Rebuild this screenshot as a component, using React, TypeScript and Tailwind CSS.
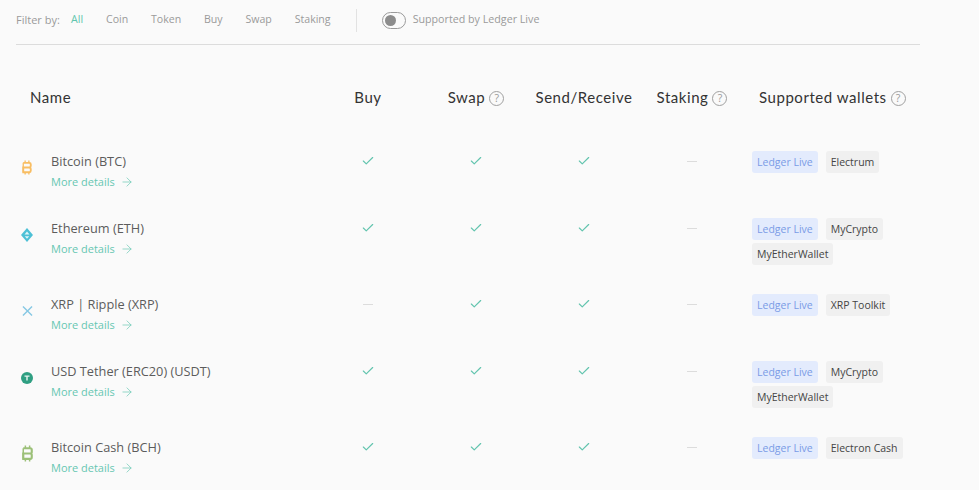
import { Check, ArrowRight } from 'lucide-react';
import type { ReactNode } from 'react';

const filters = ['All', 'Coin', 'Token', 'Buy', 'Swap', 'Staking'];

function Help() {
  return (
    <span className="ml-[4px] mt-[3px] inline-flex h-[15px] w-[15px] items-center justify-center rounded-full border border-[#a0a0a0] font-['Open_Sans',sans-serif] text-[10.5px] leading-none tracking-normal text-[#999]">
      ?
    </span>
  );
}

function Yes() {
  return <Check className="h-[14px] w-[14px] text-[#62c4ae]" strokeWidth={2} />;
}

function No() {
  return <div className="mt-[7px] h-px w-[10px] bg-[#dcdcdc]" />;
}

function Mark({ on }: { on: boolean }) {
  return <div className="flex justify-center pt-[3px]">{on ? <Yes /> : <No />}</div>;
}

function Btc({ color, big }: { color: string; big?: boolean }) {
  return (
    <svg width={big ? 13 : 12} height={big ? 17 : 15} viewBox="0 0 12 16" fill="none" stroke={color} strokeWidth="2">
      <path d="M2 3h6.500a1.500 1.500 0 0 1 1.500 1.500v2A1.500 1.500 0 0 1 8.500 8H2M2 8h6.500a1.500 1.500 0 0 1 1.500 1.500v2a1.500 1.500 0 0 1-1.500 1.500H2z" />
      <path d="M2 3v10M4 .5V3M8 .5V3M4 13v2.500M8 13v2.500" strokeWidth="1.400" />
    </svg>
  );
}

function Eth() {
  return (
    <svg width="12" height="14" viewBox="0 0 12 14">
      <path d="M6 0 12 7 6 14 0 7z" fill="#4cc0d6" />
      <path d="M6 3.500 8.500 6.500h-5z" fill="#dff4f8" />
      <path d="M3.800 8.200h4.400L6 10.800z" fill="#dff4f8" />
    </svg>
  );
}

function Xrp() {
  return (
    <svg width="11" height="10" viewBox="0 0 12 11" fill="none" stroke="#86c8e4" strokeWidth="1.500">
      <path d="M1 .5 11 10.500M11 .5 1 10.500" />
    </svg>
  );
}

function Usdt() {
  return (
    <svg width="12" height="12" viewBox="0 0 12 12">
      <circle cx="6" cy="6" r="6" fill="#2f9f82" />
      <path d="M3.500 3.500h5v1.200H6.700v3.800H5.300V4.700H3.500z" fill="#e8f5f1" />
    </svg>
  );
}

type Coin = {
  name: string;
  icon: ReactNode;
  buy: boolean;
  wallets: string[];
};

const coins: Coin[] = [
  { name: 'Bitcoin (BTC)', icon: <Btc color="#f8bd62" />, buy: true, wallets: ['Electrum'] },
  { name: 'Ethereum (ETH)', icon: <Eth />, buy: true, wallets: ['MyCrypto', 'MyEtherWallet'] },
  { name: 'XRP | Ripple (XRP)', icon: <Xrp />, buy: false, wallets: ['XRP Toolkit'] },
  { name: 'USD Tether (ERC20) (USDT)', icon: <Usdt />, buy: true, wallets: ['MyCrypto', 'MyEtherWallet'] },
  { name: 'Bitcoin Cash (BCH)', icon: <Btc color="#9cc078" big />, buy: true, wallets: ['Electron Cash'] },
];

const cols = 'grid grid-cols-[298px_108px_108px_108px_108px_174px]';

export default function App() {
  return (
    <div className="h-[490px] overflow-hidden bg-[#fafafa] font-['Open_Sans',sans-serif]">
      <div className="ml-[16px] w-[904px]">
        <div className="flex h-[45px] items-center border-b border-[#dcdcdc] pb-[4px] text-[10.6px] text-[#9a9a9a]">
          <span className="text-[11px]">Filter by:</span>
          <div className="ml-[11.3px] flex gap-[22.8px]">
            {filters.map((f) => (
              <span key={f} className={f === 'All' ? 'text-[#5fc6ae]' : ''}>
                {f}
              </span>
            ))}
          </div>
          <div className="ml-[25px] h-[23px] w-px bg-[#e2e2e2]" />
          <div className="ml-[25px] flex h-[17px] w-[24px] items-center rounded-full border border-[#9a9a9a] pl-[2px]">
            <div className="h-[11px] w-[11px] rounded-full bg-[#8c8c8c]" />
          </div>
          <span className="ml-[7px] -mt-[2px] text-[10.7px]">Supported by Ledger Live</span>
        </div>

        <div className={`${cols} mt-[40px] h-[24px] items-center font-['Lato',sans-serif] text-[15px] tracking-[0.55px] text-[#333]`}>
          <div className="pl-[14px]">Name</div>
          <div className="text-center">Buy</div>
          <div className="flex items-center justify-center">Swap<Help /></div>
          <div className="text-center">Send/Receive</div>
          <div className="flex items-center justify-center">Staking<Help /></div>
          <div className="flex items-center pl-[13px]">Supported wallets<Help /></div>
        </div>

        <div className="mt-[29px]">
          {coins.map((c) => (
            <div key={c.name} className={`${cols} py-[13px]`}>
              <div className="flex">
                <div className="flex h-[33px] w-[35px] items-center pl-[4px]">
                  <div className="flex w-[14px] justify-center">{c.icon}</div>
                </div>
                <div>
                  <div className="h-[21px] text-[12.75px] leading-[21px] text-[#5c5c5c]">{c.name}</div>
                  <div className="flex h-[20px] items-center text-[11px] text-[#67c7b2]">
                    More details
                    <ArrowRight className="ml-[5px] h-[14px] w-[14px]" strokeWidth={1.2} />
                  </div>
                </div>
              </div>
              <Mark on={c.buy} />
              <Mark on />
              <Mark on />
              <Mark on={false} />
              <div className="flex flex-wrap content-start gap-x-[8px] pl-[6px]">
                <span className="mb-[3px] flex h-[22px] items-center rounded-[3px] bg-[#e3ebfd] px-[5px] pt-[1px] text-[10.5px] text-[#7a9be6]">
                  Ledger Live
                </span>
                {c.wallets.map((w) => (
                  <span key={w} className="mb-[3px] flex h-[22px] items-center rounded-[3px] bg-[#f0f0f0] px-[5px] pt-[1px] text-[10.5px] text-[#444]">
                    {w}
                  </span>
                ))}
              </div>
            </div>
          ))}
        </div>
      </div>
    </div>
  );
}
